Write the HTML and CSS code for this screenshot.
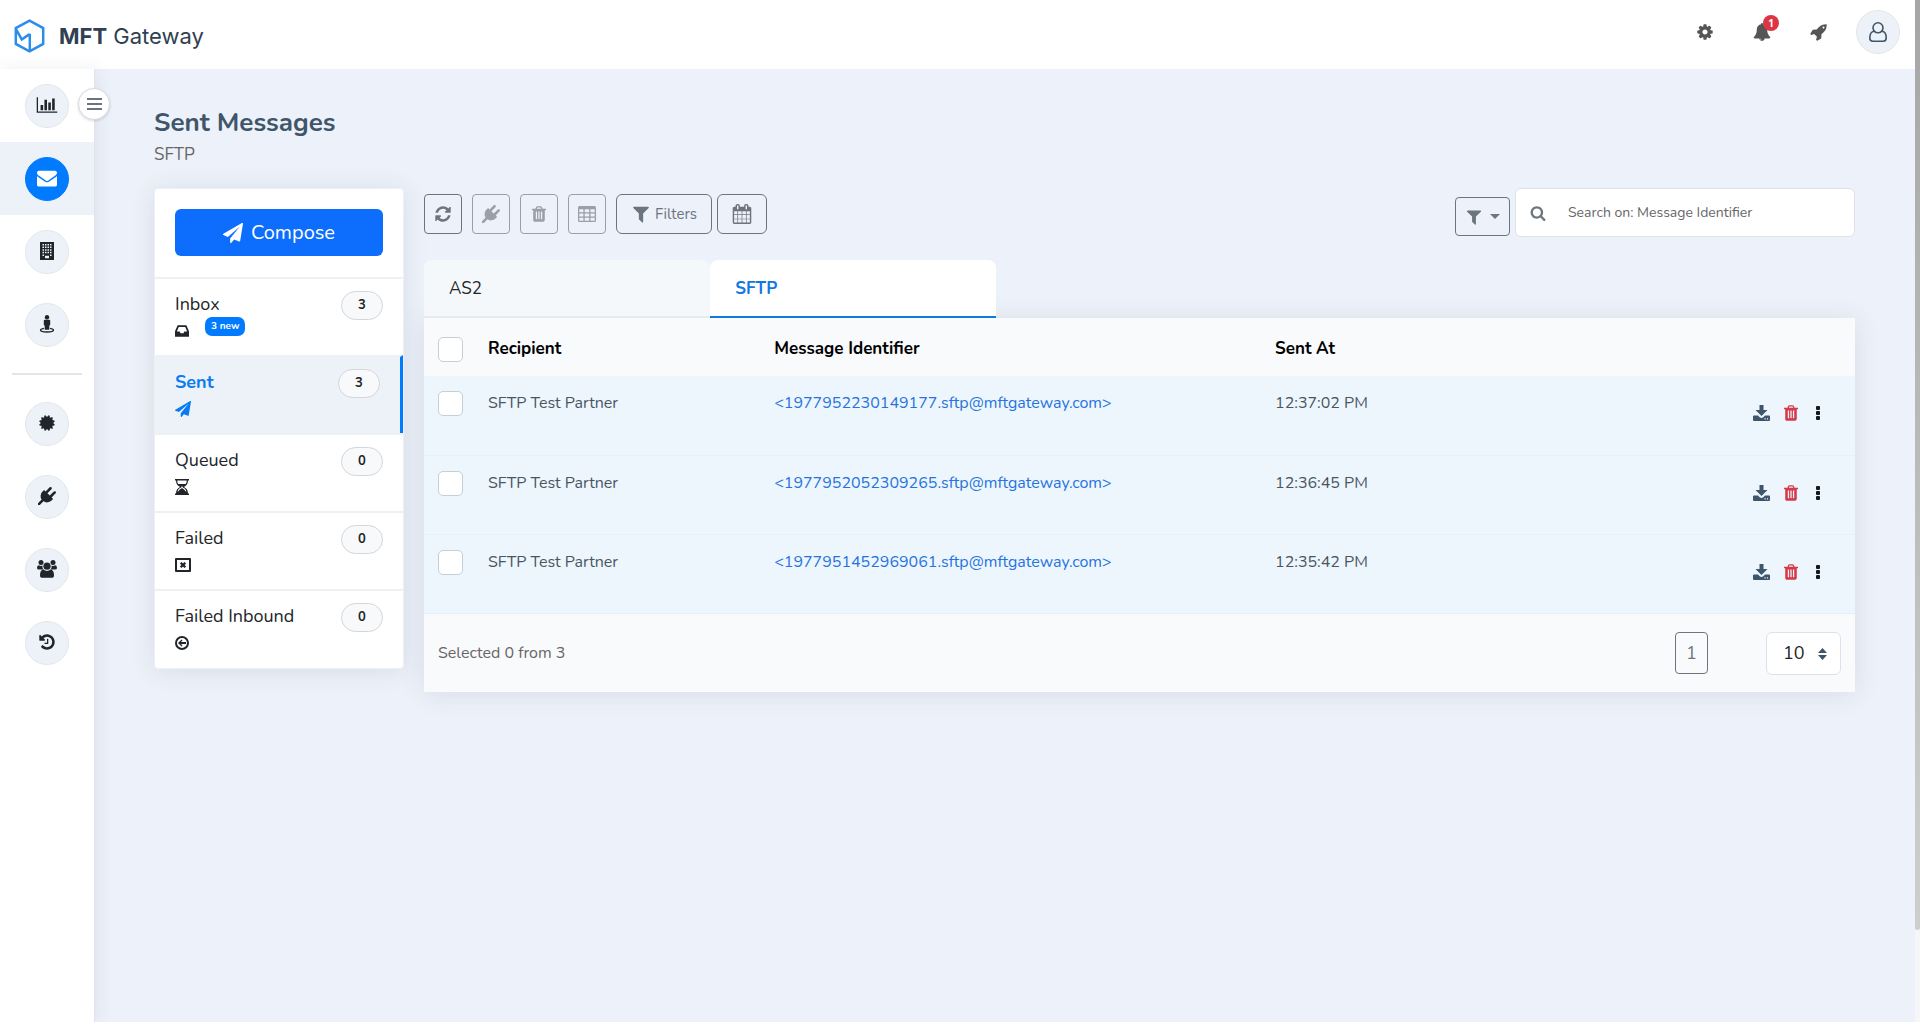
FILE: index.html
```html
<!DOCTYPE html>
<html lang="en">
<head>
<meta charset="utf-8">
<title>MFT Gateway</title>
<link rel="stylesheet" href="styles.css">
</head>
<body>
<svg class="sprite" aria-hidden="true">
<symbol id="chart" viewBox="0 0 2048 1792"><path d="M640 896v512h-256v-512h256zm384-512v1024h-256v-1024h256zm1024 1152v128h-2048v-1536h128v1408h1920zm-640-896v768h-256v-768h256zm384-384v1152h-256v-1152h256z"/></symbol>
<symbol id="mail" viewBox="0 0 1792 1792"><path d="M1792 710v794q0 66-47 113t-113 47h-1472q-66 0-113-47t-47-113v-794q44 49 101 87 362 246 497 345 57 42 92.500 65.500t94.500 48 110 24.500h2q51 0 110-24.500t94.500-48 92.500-65.500q170-123 498-345 57-39 100-87zm0-294q0 79-49 151t-122 123q-376 261-468 325-10 7-42.500 31t-54 40.500-52 36.500-57.500 31-50 10h-2q-23 0-50-10t-57.500-31-52-36.500-54-40.500-42.500-31q-91-64-262-182.500t-205-142.500q-62-42-117-115.500t-55-136.500q0-78 41.500-130t118.500-52h1472q65 0 112.500 47t47.500 113z"/></symbol>
<symbol id="building" viewBox="0 0 16 18"><path fill-rule="evenodd" d="M1 0h14v18H1zM3.500 2v1.500H5V2zm2.500 0v1.500h1.500V2zm2.500 0v1.500H10V2zM11 2v1.500h1.500V2zM3.500 4.600v1.500H5V4.600zm2.500 0v1.500h1.500V4.600zm2.500 0v1.500H10V4.600zm2.500 0v1.500h1.500V4.600zM3.500 7.200v1.500H5V7.200zm2.500 0v1.500h1.500V7.200zm2.500 0v1.500H10V7.200zm2.500 0v1.500h1.500V7.200zM3.500 9.800v1.500H5V9.800zm2.500 0v1.500h1.500V9.800zm2.500 0v1.500H10V9.800zm2.500 0v1.500h1.500V9.800zM3.500 12.400v1.500H5v-1.500zm7.500 0v1.500h1.500v-1.500zM6 13.800v2.400h4v-2.400z"/></symbol>
<symbol id="street" viewBox="0 0 16 18"><circle cx="8" cy="2.200" r="2.200"/><path d="M5.800 4.800h4.400q1 0 1 1v4q0 .8-.9.800v4.100H5.700v-4.100q-.9 0-.9-.8v-4q0-1 1-1z"/><path d="M5 13.300Q1.500 14 1.500 15c0 1.200 3 2 6.500 2s6.500-.8 6.500-2q0-1-3.500-1.700" fill="none" stroke="currentColor" stroke-width="1.300"/></symbol>
<symbol id="cert" viewBox="0 0 1792 1792"><path d="M1504 896l138 135q30 28 20 70-12 41-52 51l-188 48 53 186q12 41-19 70-29 31-70 19l-186-53-48 188q-10 40-51 52-12 2-19 2-31 0-51-22l-135-138-135 138q-28 30-70 20-41-11-51-52l-48-188-186 53q-41 12-70-19-31-29-19-70l53-186-188-48q-40-10-52-51-10-42 20-70l138-135-138-135q-30-28-20-70 12-41 52-51l188-48-53-186q-12-41 19-70 29-31 70-19l186 53 48-188q10-41 51-51 41-12 70 19l135 139 135-139q29-30 70-19 41 10 51 51l48 188 186-53q41-12 70 19 31 29 19 70l-53 186 188 48q40 10 52 51 10 42-20 70z"/></symbol>
<symbol id="plug" viewBox="0 0 1792 1792"><path d="M1755 453q37 38 37 90.500t-37 90.500l-401 400 150 150-160 160q-163 163-389.500 186.500t-411.500-100.500l-362 362h-181v-181l362-362q-124-185-100.500-411.500t186.500-389.500l160-160 150 150 400-401q38-37 91-37t90 37 37 90.500-37 90.500l-400 401 234 234 401-400q38-37 91-37t90 37z"/></symbol>
<symbol id="users" viewBox="0 0 20 18"><circle cx="4" cy="2.600" r="2.500"/><circle cx="16" cy="2.600" r="2.500"/><path d="M1.800 5.300q2.200 1.300 3.600.3-.3 3 1.200 4H2Q0 9.600 0 8q0-2.400 1.800-2.700zM18.200 5.300q-2.200 1.300-3.600.3.300 3-1.200 4H18q2 0 2-1.600 0-2.400-1.800-2.700z"/><circle cx="10" cy="6.200" r="3.600"/><path d="M6.300 9.600q3.700 2.600 7.400 0 3.300.6 3.300 5.600 0 2.600-2.400 2.600H5.400Q3 17.800 3 15.200q0-5 3.300-5.600z"/></symbol>
<symbol id="history" viewBox="0 0 1792 1792"><path d="M1664 896q0 156-61 298t-164 245-245 164-298 61q-172 0-327-72.500t-264-204.500q-7-10-6.500-22.500t8.500-20.500l137-138q10-9 25-9 16 2 23 12 73 95 179 147t225 52q104 0 198.500-40.500t163.500-109.500 109.500-163.500 40.500-198.500-40.500-198.500-109.500-163.500-163.500-109.500-198.500-40.500q-98 0-188 35.500t-160 101.500l137 138q31 30 14 69-17 40-59 40h-448q-26 0-45-19t-19-45v-448q0-42 40-59 39-17 69 14l130 129q107-101 244.500-156.500t284.500-55.500q156 0 298 61t245 164 164 245 61 298zm-640-288v448q0 14-9 23t-23 9h-320q-14 0-23-9t-9-23v-64q0-14 9-23t23-9h224v-352q0-14 9-23t23-9h64q14 0 23 9t9 23z"/></symbol>
<symbol id="plane" viewBox="0 0 1792 1792"><path d="M1764 11q33 24 27 64l-256 1536q-5 29-32 45-14 8-31 8-11 0-24-5l-453-185-242 295q-18 23-49 23-13 0-22-4-19-7-30.500-23.500t-11.500-36.500v-349l864-1059-1069 925-395-162q-37-14-40-55-2-40 32-59l1664-960q15-9 32-9 20 0 36 11z"/></symbol>
<symbol id="inbox" viewBox="128 128 1536 1536"><path d="M1151 960h316q-1-3-2.500-8t-2.500-8l-212-496h-708l-212 496q-1 2-2.500 8t-2.500 8h316l95 192h320zm513 30v482q0 26-19 45t-45 19h-1408q-26 0-45-19t-19-45v-482q0-62 25-123l238-552q10-25 36.500-42t52.500-17h832q26 0 52.500 17t36.500 42l238 552q25 61 25 123z"/></symbol>
<symbol id="hourglass" viewBox="0 0 14 16"><path fill-rule="evenodd" d="M0 0h14v1.500h-1c0 3-1.300 5.200-4 6.500 2.700 1.300 4 3.500 4 6.500h1V16H0v-1.500h1C1 11.500 2.300 9.300 5 8 2.300 6.700 1 4.500 1 1.500H0zM2.300 1.500c0 1.500.3 2.500 1 3.500h7.400c.7-1 1-2 1-3.500zM2.600 12.500h.6C4.500 10.500 6 9.500 7 9.200c1 .3 2.500 1.300 3.800 3.300h.6C10.800 10.300 9.500 9 7.700 8.500v-1H6.300v1C4.500 9 3.200 10.300 2.600 12.500z"/></symbol>
<symbol id="fail" viewBox="0 0 16 14"><path fill-rule="evenodd" d="M1 0h14q1 0 1 1v12q0 1-1 1H1q-1 0-1-1V1q0-1 1-1zm1 2v10h12V2z"/><path d="M5.700 4.700l4.600 4.600M10.300 4.700L5.700 9.300" stroke="currentColor" stroke-width="2.300"/></symbol>
<symbol id="inbound" viewBox="0 0 14 14"><circle cx="7" cy="7" r="6" fill="none" stroke="currentColor" stroke-width="2"/><path d="M3 7l3.600-3.400.9.900L6 6h5v2H6l1.500 1.500-.9.900z"/></symbol>
<symbol id="refresh" viewBox="0 0 1792 1792"><path d="M1639 1056q0 5-1 7-64 268-268 434.500t-478 166.500q-146 0-282.500-55t-243.500-157l-129 129q-19 19-45 19t-45-19-19-45v-448q0-26 19-45t45-19h448q26 0 45 19t19 45-19 45l-137 137q71 66 161 102t187 36q134 0 250-65t186-179q11-17 53-117 8-23 30-23h192q13 0 22.500 9.500t9.500 22.500zm25-800v448q0 26-19 45t-45 19h-448q-26 0-45-19t-19-45 19-45l138-138q-148-137-349-137-134 0-250 65t-186 179q-11 17-53 117-8 23-30 23h-199q-13 0-22.500-9.500t-9.500-22.500v-7q65-268 270-434.500t480-166.500q146 0 284 55.500t245 156.500l130-129q19-19 45-19t45 19 19 45z"/></symbol>
<symbol id="trash" viewBox="0 0 1792 1792"><path d="M704 1376v-704q0-14-9-23t-23-9h-64q-14 0-23 9t-9 23v704q0 14 9 23t23 9h64q14 0 23-9t9-23zm256 0v-704q0-14-9-23t-23-9h-64q-14 0-23 9t-9 23v704q0 14 9 23t23 9h64q14 0 23-9t9-23zm256 0v-704q0-14-9-23t-23-9h-64q-14 0-23 9t-9 23v704q0 14 9 23t23 9h64q14 0 23-9t9-23zm-544-992h448l-48-117q-7-9-17-11h-317q-10 2-17 11zm928 32v64q0 14-9 23t-23 9h-96v948q0 83-47 143.500t-113 60.500h-832q-66 0-113-58.500t-47-141.500v-952h-96q-14 0-23-9t-9-23v-64q0-14 9-23t23-9h309l70-167q15-37 54-63t79-26h320q40 0 79 26t54 63l70 167h309q14 0 23 9t9 23z"/></symbol>
<symbol id="grid" viewBox="0 0 18 16"><path fill-rule="evenodd" d="M1.500 0h15Q18 0 18 1.500v13q0 1.500-1.500 1.500h-15Q0 16 0 14.500v-13Q0 0 1.500 0zM1.300 3.300v2.900h4.100V3.300zm5.400 0v2.900h4.500V3.300zm5.800 0v2.900h4.200V3.300zM1.300 7.500v2.900h4.100V7.500zm5.400 0v2.900h4.500V7.500zm5.800 0v2.900h4.200V7.500zM1.300 11.700v3h4.100v-3zm5.400 0v3h4.500v-3zm5.800 0v3h4.200v-3z"/></symbol>
<symbol id="filter" viewBox="0 0 1792 1792"><path d="M1595 295q17 41-14 70l-493 493v742q0 42-39 59-13 5-25 5-27 0-45-19l-256-256q-19-19-19-45v-486l-493-493q-31-29-14-70 17-39 59-39h1280q42 0 59 39z"/></symbol>
<symbol id="calendar" viewBox="0 0 1792 1792"><path d="M192 1664h288v-288h-288v288zm352 0h320v-288h-320v288zm-352-352h288v-320h-288v320zm352 0h320v-320h-320v320zm-352-384h288v-288h-288v288zm736 736h320v-288h-320v288zm-384-736h320v-288h-320v288zm768 736h288v-288h-288v288zm-384-352h320v-320h-320v320zm-352-864v-288q0-13-9.500-22.500t-22.500-9.500h-64q-13 0-22.500 9.500t-9.500 22.500v288q0 13 9.500 22.500t22.500 9.500h64q13 0 22.500-9.500t9.500-22.500zm736 864h288v-320h-288v320zm-384-384h320v-288h-320v288zm384 0h288v-288h-288v288zm32-480v-288q0-13-9.500-22.500t-22.500-9.500h-64q-13 0-22.500 9.500t-9.500 22.500v288q0 13 9.500 22.500t22.500 9.500h64q13 0 22.500-9.500t9.500-22.500zm384-64v1280q0 52-38 90t-90 38h-1408q-52 0-90-38t-38-90v-1280q0-52 38-90t90-38h128v-96q0-66 47-113t113-47h64q66 0 113 47t47 113v96h384v-96q0-66 47-113t113-47h64q66 0 113 47t47 113v96h128q52 0 90 38t38 90z"/></symbol>
<symbol id="search" viewBox="0 0 1792 1792"><path d="M1216 832q0-185-131.500-316.500t-316.500-131.500-316.500 131.500-131.500 316.500 131.500 316.500 316.500 131.500 316.500-131.500 131.500-316.500zm512 832q0 52-38 90t-90 38q-54 0-90-38l-343-342q-179 124-399 124-143 0-273.500-55.500t-225-150-150-225-55.500-273.500 55.500-273.500 150-225 225-150 273.500-55.500 273.500 55.500 225 150 150 225 55.500 273.500q0 220-124 399l343 343q37 37 37 90z"/></symbol>
<symbol id="cog" viewBox="0 0 1792 1792"><path d="M1152 896q0-106-75-181t-181-75-181 75-75 181 75 181 181 75 181-75 75-181zm512-109v222q0 12-8 23t-20 13l-185 28q-19 54-39 91 35 50 107 138 10 12 10 25t-9 23q-27 37-99 108t-94 71q-12 0-26-9l-138-108q-44 23-91 38-16 136-29 186-7 28-36 28h-222q-14 0-24.500-8.500t-11.500-21.500l-28-184q-49-16-90-37l-141 107q-10 9-25 9-14 0-25-11-126-114-165-168-7-10-7-23 0-12 8-23 15-21 51-66.500t54-70.500q-27-50-41-99l-183-27q-13-2-21-12.500t-8-23.500v-222q0-12 8-23t19-13l186-28q14-46 39-92-40-57-107-138-10-12-10-24 0-10 9-23 26-36 98.500-107.500t94.500-71.500q13 0 26 10l138 107q44-23 91-38 16-136 29-186 7-28 36-28h222q14 0 24.500 8.500t11.500 21.500l28 184q49 16 90 37l142-107q9-9 24-9 13 0 25 10 129 119 165 170 7 8 7 22 0 12-8 23-15 21-51 66.500t-54 70.500q26 50 41 98l183 28q13 2 21 12.500t8 23.500z"/></symbol>
<symbol id="bell" viewBox="0 0 1792 1792"><path d="M912 1696q0-16-16-16-59 0-101.500-42.500t-42.500-101.500q0-16-16-16t-16 16q0 73 51.500 124.500t124.500 51.500q16 0 16-16zm816-288q0 52-38 90t-90 38h-448q0 106-75 181t-181 75-181-75-75-181h-448q-52 0-90-38t-38-90q50-42 91-88t85-119.500 74.500-158.500 50-206 19.500-260q0-152 117-282.500t307-158.500q-8-19-8-39 0-40 28-68t68-28 68 28 28 68q0 20-8 39 190 28 307 158.500t117 282.500q0 139 19.500 260t50 206 74.500 158.500 85 119.500 91 88z"/></symbol>
<symbol id="rocket" viewBox="0 0 1792 1792"><path d="M1440 448q0-40-28-68t-68-28-68 28-28 68 28 68 68 28 68-28 28-68zm224-288q0 249-75.500 430.500t-253.500 360.500q-81 80-195 176l-20 379q-2 16-16 26l-384 224q-7 4-16 4-12 0-23-9l-64-64q-13-14-8-32l85-276-281-281-276 85q-3 1-9 1-14 0-23-9l-64-64q-17-19-5-39l224-384q10-14 26-16l379-20q96-114 176-195 188-187 358-258t431-71q14 0 24 9.500t10 22.500z"/></symbol>
<symbol id="person" viewBox="0 0 18 20"><g fill="none" stroke="currentColor" stroke-width="1.600"><circle cx="9" cy="5.800" r="5"/><path d="M5.200 9.200C2 9.200.8 12.500.8 16q0 3.200 3 3.200h10.400q3 0 3-3.200c0-3.500-1.200-6.800-4.400-6.800"/></g></symbol>
<symbol id="download" viewBox="0 0 17 16"><path d="M6.500 0h4v5h4L8.500 11l-6-6h4z"/><path fill-rule="evenodd" d="M1 10.500h4l1.700 1.700q1.800 1.500 3.600 0l1.700-1.700h4q1 0 1 1V15q0 1-1 1H1q-1 0-1-1v-3.500q0-1 1-1zm10.500 2.800v1.200h1.200v-1.200zm2.400 0v1.200h1.200v-1.200z"/></symbol>
<symbol id="dots" viewBox="0 0 4 14"><rect width="4" height="4" rx="1"/><rect y="5" width="4" height="4" rx="1"/><rect y="10" width="4" height="4" rx="1"/></symbol>
<symbol id="sort" viewBox="0 0 9 12"><path d="M4.500 0L9 5H0zM4.500 12L0 7h9z"/></symbol>
</svg>

<header class="topbar">
  <a class="brand" href="#">
    <svg class="logo" viewBox="0 0 30 33" aria-hidden="true"><path d="M15 1.500l13.300 7.300v15.400L15 31.500 1.700 24.200V8.800zM1.700 9.500l5.800 10.300 6.800-4.600 1 .3v15.500" fill="none" stroke="#2b8deb" stroke-width="2.400"/></svg>
    <span><b>MFT</b> Gateway</span>
  </a>
  <nav class="tools" aria-label="Account">
    <button class="tool" aria-label="Settings"><svg class="i18"><use href="#cog"/></svg></button>
    <button class="tool" aria-label="Notifications"><svg class="i18"><use href="#bell"/></svg><span class="count">1</span></button>
    <button class="tool" aria-label="What is new"><svg class="i18"><use href="#rocket"/></svg></button>
    <button class="round" aria-label="Profile"><svg class="avatar"><use href="#person"/></svg></button>
  </nav>
</header>

<div class="shell">
  <nav class="rail" aria-label="Main">
    <button class="toggle" aria-label="Toggle menu"><span></span><span></span><span></span></button>
    <a href="#" aria-label="Dashboard"><span class="round"><svg class="wide"><use href="#chart"/></svg></span></a>
    <a href="#" class="on" aria-label="Messages"><span class="round"><svg class="i20"><use href="#mail"/></svg></span></a>
    <a href="#" aria-label="Stations"><span class="round"><svg class="i18"><use href="#building"/></svg></span></a>
    <a href="#" aria-label="Partners"><span class="round"><svg class="i18"><use href="#street"/></svg></span></a>
    <hr>
    <a href="#" aria-label="Certificates"><span class="round"><svg class="i18"><use href="#cert"/></svg></span></a>
    <a href="#" aria-label="Integrations"><span class="round"><svg class="i18"><use href="#plug"/></svg></span></a>
    <a href="#" aria-label="Users"><span class="round"><svg class="i20"><use href="#users"/></svg></span></a>
    <a href="#" aria-label="History"><span class="round"><svg class="i18"><use href="#history"/></svg></span></a>
  </nav>

  <main class="main">
    <h1>Sent Messages</h1>
    <p class="sub">SFTP</p>
    <div class="cols">
      <aside class="folders">
        <div class="compose-box"><button class="compose"><svg class="i20"><use href="#plane"/></svg>Compose</button></div>
        <a class="folder" href="#"><span>Inbox<span class="meta"><svg class="i14"><use href="#inbox"/></svg><span class="new">3 new</span></span></span><span class="pill">3</span></a>
        <a class="folder current" href="#"><span>Sent<span class="meta"><svg class="i16"><use href="#plane"/></svg></span></span><span class="pill">3</span></a>
        <a class="folder" href="#"><span>Queued<span class="meta"><svg class="glass"><use href="#hourglass"/></svg></span></span><span class="pill">0</span></a>
        <a class="folder" href="#"><span>Failed<span class="meta"><svg class="i16"><use href="#fail"/></svg></span></span><span class="pill">0</span></a>
        <a class="folder" href="#"><span>Failed Inbound<span class="meta"><svg class="i14"><use href="#inbound"/></svg></span></span><span class="pill">0</span></a>
      </aside>

      <section class="content">
        <div class="bar">
          <div class="actions">
            <button class="btn" aria-label="Refresh"><svg class="i18"><use href="#refresh"/></svg></button>
            <button class="btn" disabled aria-label="Connect"><svg class="i18"><use href="#plug"/></svg></button>
            <button class="btn" disabled aria-label="Delete"><svg class="i18"><use href="#trash"/></svg></button>
            <button class="btn" disabled aria-label="Columns"><svg class="i18"><use href="#grid"/></svg></button>
            <span class="pair"><button class="btn lg"><svg class="i20"><use href="#filter"/></svg>Filters</button>
            <button class="btn lg" aria-label="Dates"><svg class="i20"><use href="#calendar"/></svg></button></span>
          </div>
          <div class="find">
            <button class="btn menu" aria-label="Search field"><svg class="i18"><use href="#filter"/></svg><span class="caret"></span></button>
            <label class="search"><svg class="i16"><use href="#search"/></svg><input type="text" aria-label="Search" placeholder="Search on: Message Identifier"></label>
          </div>
        </div>
        <div class="tabs" role="tablist">
          <button role="tab">AS2</button>
          <button role="tab" aria-selected="true">SFTP</button>
        </div>
        <div class="panel">
          <table>
            <thead><tr><th class="tick"><input type="checkbox" aria-label="Select all"></th><th class="who">Recipient</th><th class="ident">Message Identifier</th><th>Sent At</th><th class="ops"></th></tr></thead>
            <tbody>
              <tr><td class="tick"><input type="checkbox" aria-label="Select row 1"></td><td>SFTP Test Partner</td><td><a href="#">&lt;1977952230149177.sftp@mftgateway.com&gt;</a></td><td>12:37:02 PM</td><td class="ops"><div><button aria-label="Download"><svg class="dl"><use href="#download"/></svg></button><button class="del" aria-label="Delete"><svg class="i18"><use href="#trash"/></svg></button><button class="more" aria-label="More"><svg class="kebab"><use href="#dots"/></svg></button></div></td></tr>
              <tr><td class="tick"><input type="checkbox" aria-label="Select row 2"></td><td>SFTP Test Partner</td><td><a href="#">&lt;1977952052309265.sftp@mftgateway.com&gt;</a></td><td>12:36:45 PM</td><td class="ops"><div><button aria-label="Download"><svg class="dl"><use href="#download"/></svg></button><button class="del" aria-label="Delete"><svg class="i18"><use href="#trash"/></svg></button><button class="more" aria-label="More"><svg class="kebab"><use href="#dots"/></svg></button></div></td></tr>
              <tr><td class="tick"><input type="checkbox" aria-label="Select row 3"></td><td>SFTP Test Partner</td><td><a href="#">&lt;1977951452969061.sftp@mftgateway.com&gt;</a></td><td>12:35:42 PM</td><td class="ops"><div><button aria-label="Download"><svg class="dl"><use href="#download"/></svg></button><button class="del" aria-label="Delete"><svg class="i18"><use href="#trash"/></svg></button><button class="more" aria-label="More"><svg class="kebab"><use href="#dots"/></svg></button></div></td></tr>
            </tbody>
          </table>
          <footer class="foot">
            <span>Selected 0 from 3</span>
            <button class="page">1</button>
            <label class="size"><select aria-label="Rows per page"><option>10</option></select><svg><use href="#sort"/></svg></label>
          </footer>
        </div>
      </section>
    </div>
  </main>
</div>
<div class="track" aria-hidden="true"><div class="thumb"></div></div>
</body>
</html>
```

FILE: styles.css
```css
* { box-sizing: border-box; }
body {
  margin: 0;
  min-height: 100vh;
  display: flex;
  flex-direction: column;
  padding-right: 5px;
  background: #edf1f9;
  color: #212529;
  font: 16px/24px "Nunito", "Lato", sans-serif;
}
button, input, select { font: inherit; color: inherit; }
button { padding: 0; border: 0; background: none; }
a { color: inherit; text-decoration: none; }
svg { display: block; flex: none; fill: currentColor; }
.sprite { position: absolute; width: 0; height: 0; }
.i14 { width: 14px; height: 14px; }
.i16 { width: 16px; height: 16px; }
.i18 { width: 18px; height: 18px; }
.i20 { width: 20px; height: 20px; }
.wide { width: 22px; height: 18px; }
.glass { width: 14px; height: 16px; }

.topbar {
  display: flex;
  align-items: center;
  justify-content: space-between;
  height: 69px;
  padding: 0 15px 6px 14px;
  background: #fff;
}
.brand {
  display: flex;
  align-items: center;
  gap: 14px;
  padding-top: 8px;
  color: #2f4050;
  font: 22px/30px "Inter", sans-serif;
}
.logo { width: 31px; height: 34px; }
.tools { display: flex; align-items: center; gap: 39px; color: #555; }
.tool { position: relative; }
.tools .round { margin-left: -11px; color: #3f566a; }
.avatar { width: 18px; height: 20px; }
.count {
  position: absolute;
  top: -8px;
  right: -8px;
  width: 16px;
  height: 16px;
  border-radius: 50%;
  background: #dc3545;
  color: #fff;
  font: 700 10px/16px "Noto Sans", sans-serif;
}
.round {
  display: grid;
  place-items: center;
  width: 44px;
  height: 44px;
  border: 1px solid #e1e7ea;
  border-radius: 50%;
  background: #edf2f8;
}

.shell { display: flex; flex: 1; }
.rail {
  position: relative;
  flex: none;
  width: 95px;
  background: #fff;
  border-right: 1px solid #dfe3ea;
  box-shadow: 2px 0 16px rgba(60, 80, 110, .09);
}
.rail a { display: grid; place-items: center; height: 73px; }
.rail .round { padding-bottom: 2px; }
.rail .on { background: #edf2f9; }
.rail .on .round { background: #007bff; border-color: #007bff; color: #fff; }
.rail hr { margin: 12px; border: 0; border-top: 2px solid #e2e6ea; }
.toggle {
  position: absolute;
  top: 19px;
  right: -16px;
  display: grid;
  align-content: center;
  justify-items: center;
  gap: 3px;
  width: 32px;
  height: 32px;
  border: 1px solid #d8dce2;
  border-radius: 50%;
  background: #fff;
  box-shadow: 0 1px 3px rgba(0, 0, 0, .15);
}
.toggle span { width: 15px; height: 2px; background: #6b7280; }

.main { flex: 1; padding: 37px 60px 40px 59px; }
h1 { margin: 0; color: #3f566a; font-size: 26px; line-height: 34px; font-weight: 700; }
.sub { margin: 3px 0 21px; color: #666; font-size: 17px; }
.cols { display: flex; align-items: flex-start; gap: 20px; }
.folders {
  width: 250px;
  padding-bottom: 1px;
  border: 1px solid #edf1f5;
  border-radius: 4px;
  background: #fff;
  box-shadow: 0 2px 24px rgba(60, 80, 110, .12);
}
.compose-box { padding: 20px 20px 21px; }
.compose {
  display: flex;
  align-items: center;
  justify-content: center;
  gap: 8px;
  width: 100%;
  height: 47px;
  border-radius: 6px;
  background: #0d6efd;
  color: #fff;
  font-size: 20px;
}
.folder {
  display: flex;
  justify-content: space-between;
  height: 78px;
  padding: 12px 20px 0;
  border-top: 2px solid #edf1f4;
  font-size: 18px;
  line-height: 26px;
}
.folder.current { background: #edf2f9; border-right: 3px solid #007bff; color: #0a7bf0; font-weight: 700; }
.meta { display: flex; align-items: center; gap: 16px; height: 27px; }
.new {
  align-self: start;
  padding: 0 6px;
  border-radius: 7px;
  background: #007bff;
  color: #fff;
  font: 700 10px/19px "Nunito", "Lato", sans-serif;
}
.pill {
  width: 42px;
  height: 29px;
  border: 1px solid #d3d6da;
  border-radius: 15px;
  background: #f8f9fb;
  color: #212529;
  font-size: 13px;
  line-height: 26px;
  font-weight: 700;
  text-align: center;
}

.content { flex: 1; min-width: 0; }
.bar { display: flex; justify-content: space-between; margin-bottom: 23px; }
.actions { display: flex; gap: 10px; padding-top: 6px; }
.pair { display: flex; gap: 5px; }
.btn {
  display: flex;
  align-items: center;
  justify-content: center;
  gap: 4px;
  height: 40px;
  padding: 0 9px;
  border: 1px solid #6c757d;
  border-radius: 4px;
  color: #6c757d;
}
.btn:disabled { opacity: .65; }
.btn.lg { padding: 0 14px; border-radius: 6px; font-size: 15px; }
.btn.menu { height: 39px; gap: 7px; margin-top: 9px; }
.caret { border: 5px solid transparent; border-top-color: #6c757d; border-bottom: 0; }
.find { display: flex; align-items: flex-start; gap: 5px; }
.search {
  display: flex;
  align-items: center;
  gap: 22px;
  width: 340px;
  height: 49px;
  padding: 0 14px;
  border: 1px solid #dee2e6;
  border-radius: 6px;
  background: #fff;
  color: #6c757d;
}
.search input { flex: 1; min-width: 0; padding: 1px 0 0; border: 0; outline: 0; background: none; font-size: 14px; }
.search input::placeholder { color: #666; }

.tabs { display: flex; }
.tabs button {
  width: 20%;
  height: 58px;
  padding: 1px 25px 0;
  border-bottom: 2px solid #e6eaec;
  border-radius: 8px 8px 0 0;
  background: #f4f8fb;
  font-size: 17px;
  text-align: left;
}
.tabs [aria-selected] { border-color: #0f79e0; background: #fff; color: #0f79e0; font-weight: 700; }

.panel { background: #f9fafc; box-shadow: 0 2px 24px rgba(60, 80, 110, .12); }
.panel table { width: 100%; border-collapse: collapse; table-layout: fixed; }
th, td { padding: 0; text-align: left; vertical-align: top; }
th { height: 58px; padding-top: 19px; color: #000; font-size: 17px; font-weight: 700; }
tbody tr { height: 79px; background: #edf6fd; border-bottom: 1px solid #e7f0f4; }
td { padding-top: 15px; color: #4a5560; }
td a { color: #2673dd; }
th.tick, td.tick { width: 64px; padding-left: 14px; }
.who { width: 20%; }
.ident { width: 35%; }
.tick input {
  display: block;
  appearance: none;
  width: 25px;
  height: 25px;
  margin: 0;
  border: 1px solid #c3d0d9;
  border-radius: 5px;
  background: #fff;
}
.ops { width: 140px; }
.ops div { display: flex; align-items: center; justify-content: flex-end; gap: 12px; padding: 13px 35px 0 0; }
.dl { width: 17px; height: 16px; color: #3f566a; }
.del { color: #d63a48; }
.more { padding-left: 4px; color: #16191c; }
.kebab { width: 4px; height: 14px; }
.foot { display: flex; align-items: center; padding: 18px 14px 17px; color: #666; }
.foot > span { flex: 1; }
.page { width: 33px; height: 42px; border: 1px solid #6c757d; border-radius: 4px; color: #6c757d; font-size: 18px; }
.size { position: relative; margin-left: 58px; color: #3f566a; }
.size select {
  display: block;
  appearance: none;
  width: 75px;
  height: 43px;
  padding: 0 16px;
  border: 1px solid #dee2e6;
  border-radius: 6px;
  background: #fff;
  color: #212529;
  font-size: 18px;
}
.size svg { position: absolute; top: 16px; right: 14px; width: 9px; height: 12px; }

.track { position: fixed; inset: 0 0 0 auto; width: 5px; background: #f5f6f8; }
.thumb { height: 91%; border-radius: 0 0 3px 3px; background: linear-gradient(#a6a6a6, #cdcfcf); }
```
